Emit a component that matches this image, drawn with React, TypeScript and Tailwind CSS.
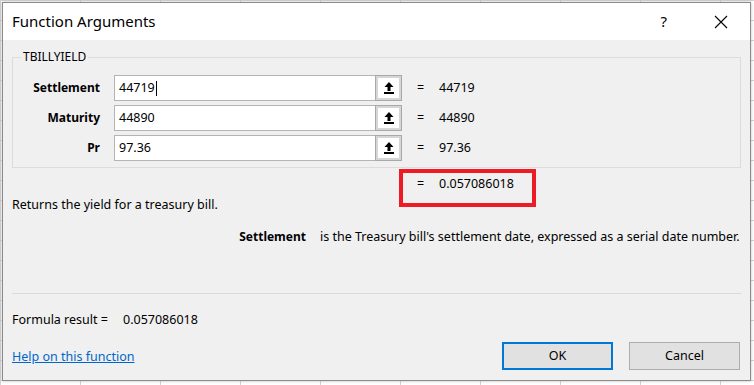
import React from "react";

const font = { fontFamily: '"Noto Sans", "Open Sans", sans-serif' };

function RefButton() {
  return (
    <div className="w-[27px] h-[26px] border border-[#a9a9a9] bg-[#d6d6d6] p-[2px]">
      <div className="w-full h-full bg-white flex items-center justify-center">
        <svg width="12" height="16" viewBox="0 0 12 16">
          <polygon points="6,2 10.5,7 1.5,7" fill="#000" />
          <rect x="4.5" y="6.5" width="3" height="4.5" fill="#000" />
          <rect x="1" y="12" width="10" height="2" fill="#000" />
        </svg>
      </div>
    </div>
  );
}

function ArgRow({ label, value, cursor }: { label: string; value: string; cursor?: boolean }) {
  return (
    <div className="flex items-center h-[26px]">
      <div className="w-[87px] text-right font-bold text-[12px] text-black">{label}</div>
      <div className="ml-[14px] w-[261px] h-[26px] bg-white border border-[#b4b4b4] border-r-0 flex items-center pl-[4px] text-[12.5px] text-black">
        <span>{value}</span>
        {cursor && <span className="inline-block w-[1px] h-[15px] bg-black ml-[1px]" />}
      </div>
      <RefButton />
      <div className="ml-[15px] w-[22px] text-[12.5px] text-black">=</div>
      <div className="text-[12.5px] text-black">{value}</div>
    </div>
  );
}

export default function App() {
  return (
    <div
      className="w-[754px] h-[385px] bg-white pl-[2px] pt-[2px] overflow-hidden bg-[linear-gradient(to_right,#d4d4d4_1px,transparent_1px),linear-gradient(to_bottom,#d4d4d4_1px,transparent_1px)] bg-[length:80px_20px]"
      style={font}
    >
      <div className="w-[749px] h-[379px] border border-[#8a8a8a] bg-[#f0f0f0] flex flex-col shadow-[0_0_3px_rgba(0,0,0,0.25)]">
        {/* Title bar */}
        <div className="h-[37px] bg-white flex items-center pl-[9px] pr-[22px] shrink-0">
          <div className="text-[15px] text-black flex-1">Function Arguments</div>
          <div className="text-[15px] text-black mr-[47px]">?</div>
          <svg width="14" height="14" viewBox="0 0 14 14">
            <path d="M1 1 L13 13 M13 1 L1 13" stroke="#000" strokeWidth="1.1" />
          </svg>
        </div>

        {/* Body */}
        <div className="relative flex-1 flex flex-col px-[9px]">
          <div className="relative mt-[17px] h-[111px] border border-[#dcdcdc] pt-[17px] flex flex-col gap-[4px]">
            <span className="absolute -top-[9px] left-[8px] px-[2px] bg-[#f0f0f0] text-[12px] text-black leading-[16px]">
              TBILLYIELD
            </span>
            <ArgRow label="Settlement" value="44719" cursor />
            <ArgRow label="Maturity" value="44890" />
            <ArgRow label="Pr" value="97.36" />
          </div>

          <div className="mt-[6px] h-[20px] flex items-center text-[12.5px] text-black">
            <div className="ml-[405px] w-[22px]">=</div>
            <div>0.057086018</div>
          </div>

          <div className="mt-[1px] h-[20px] flex items-center text-[12.5px] text-black">
            Returns the yield for a treasury bill.
          </div>

          <div className="mt-[12px] h-[20px] flex items-center text-[12.5px] text-black whitespace-nowrap">
            <div className="w-[294px] text-right font-bold text-[12px]">Settlement</div>
            <div className="ml-[14px]">is the Treasury bill's settlement date, expressed as a serial date number.</div>
          </div>

          <div className="mt-[46px] h-[1px] bg-[#dadada]" />

          <div className="mt-[16px] h-[20px] flex items-center text-[12.5px] text-black">
            <div className="w-[111px]">Formula result =</div>
            <div>0.057086018</div>
          </div>

          <div className="mt-[12px] h-[28px] flex items-center">
            <a className="text-[12.5px] text-[#0066cc] underline flex-1 mt-[3px]" href="#">
              Help on this function
            </a>
            <button className="w-[111px] h-[28px] bg-[#e1e1e1] border-2 border-[#0078d7] text-[12.5px] text-black">
              OK
            </button>
            <button className="ml-[16px] mr-[1px] w-[111px] h-[28px] bg-[#e1e1e1] border border-[#adadad] text-[12.5px] text-black">
              Cancel
            </button>
          </div>

          {/* red annotation box */}
          <div className="absolute left-[396px] top-[129px] w-[137px] h-[38px] border-4 border-[#ed1c24]" />
        </div>
      </div>
    </div>
  );
}
